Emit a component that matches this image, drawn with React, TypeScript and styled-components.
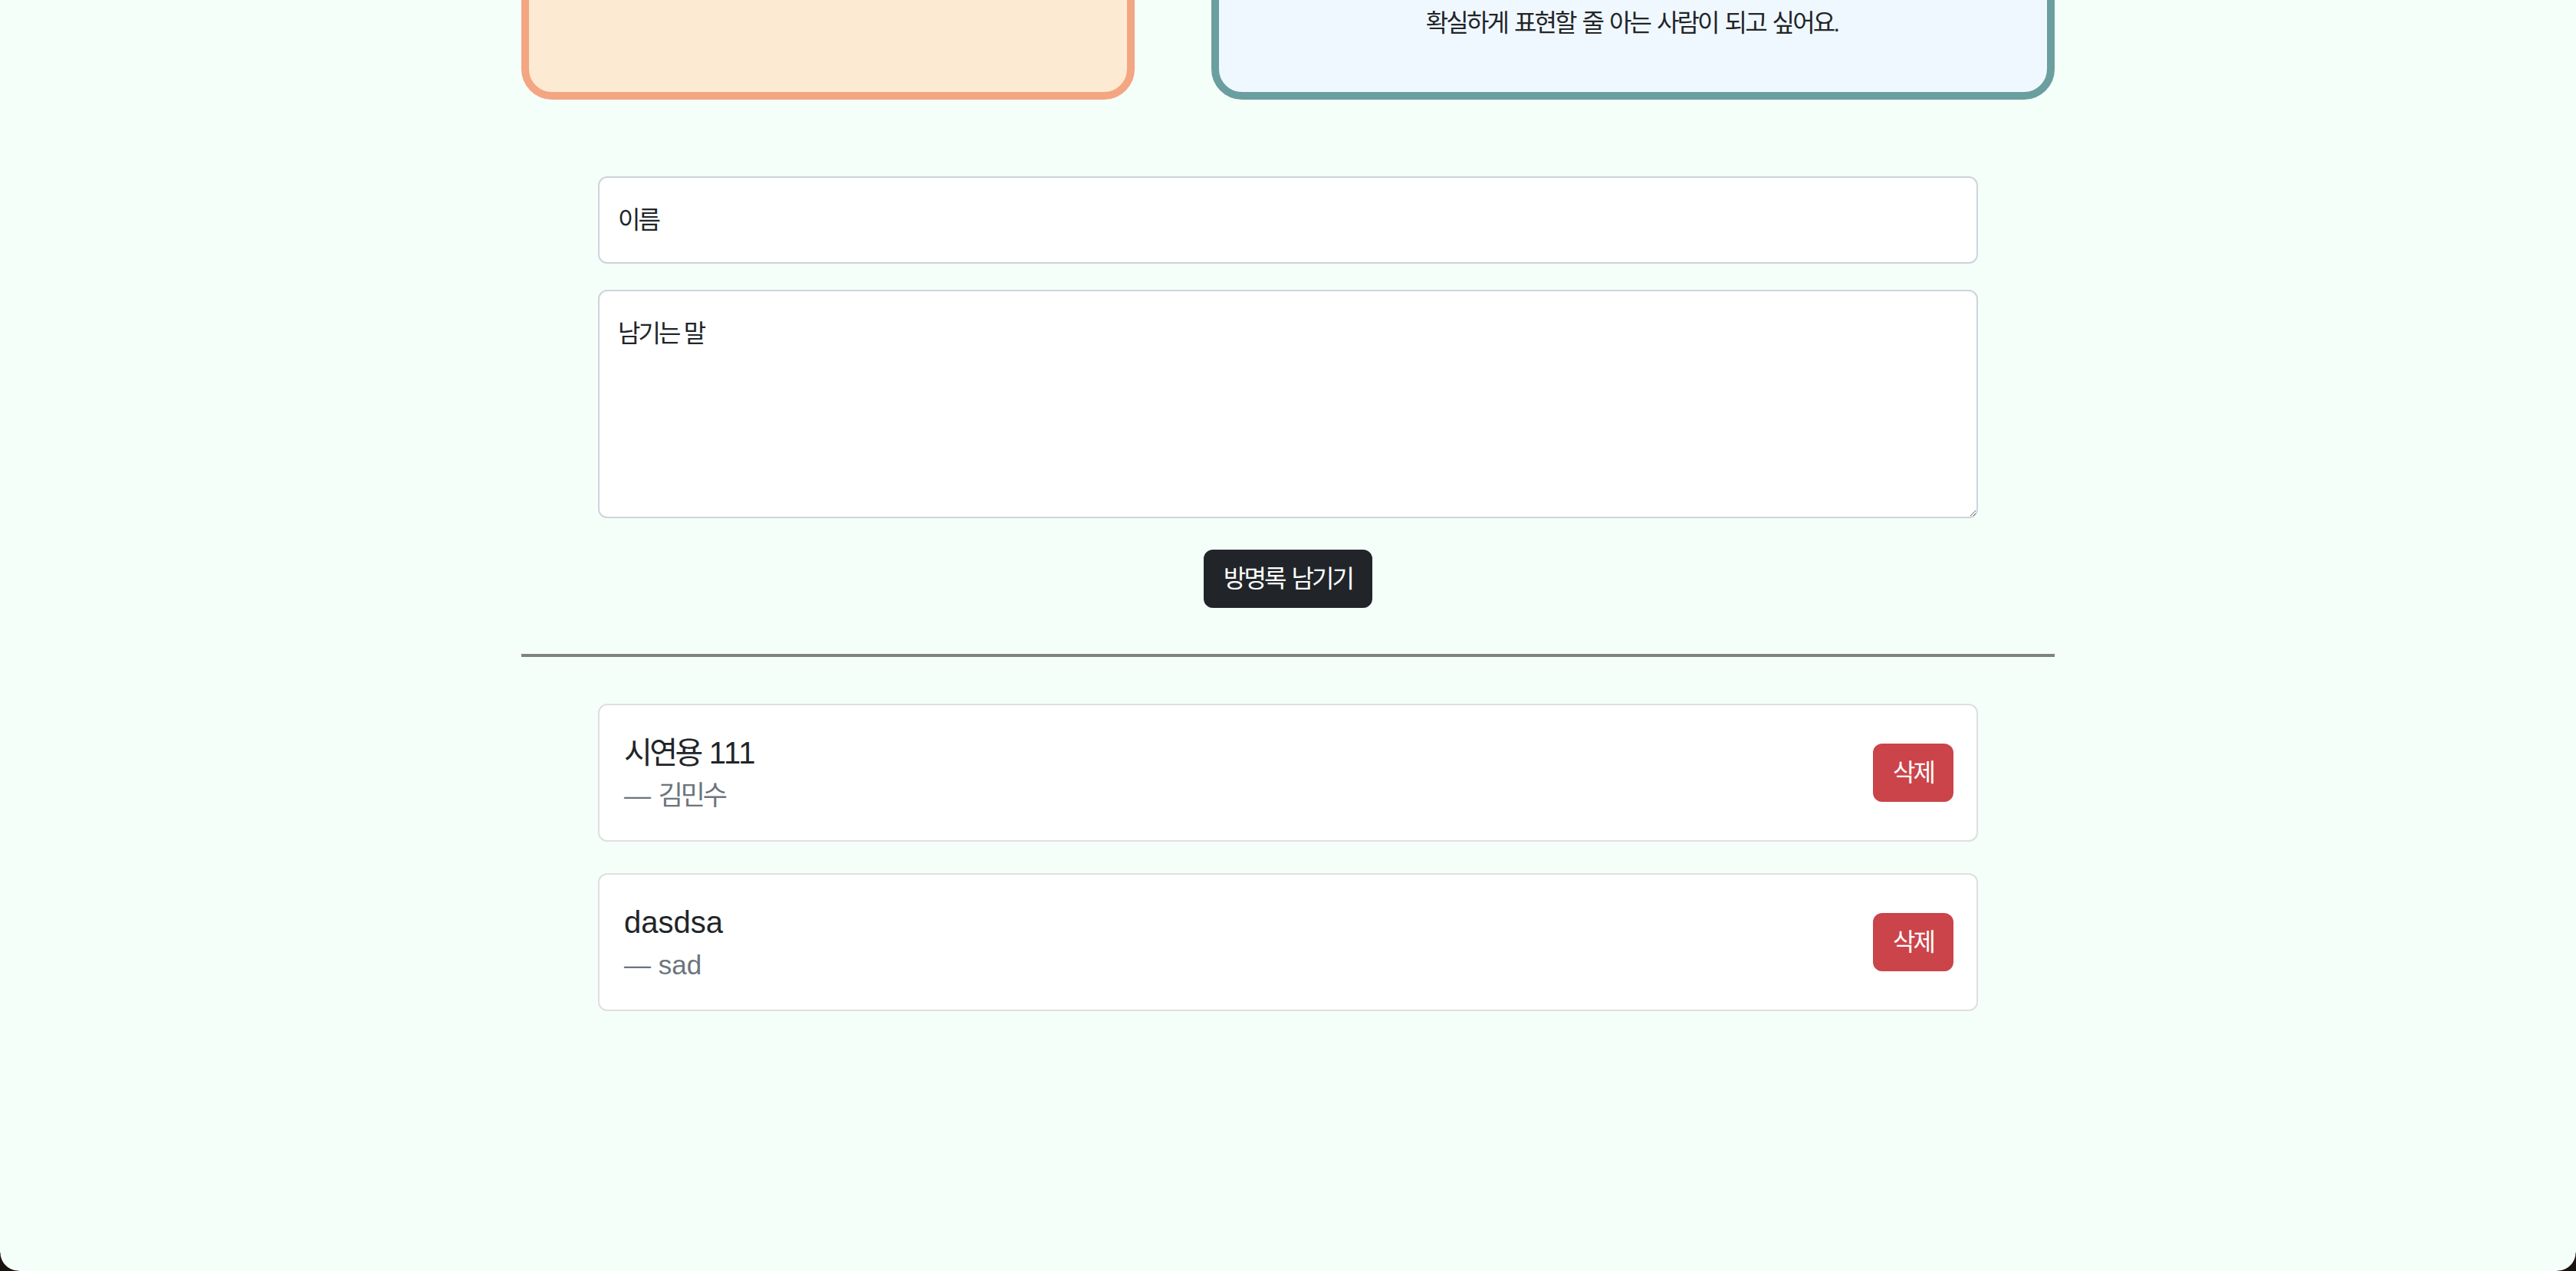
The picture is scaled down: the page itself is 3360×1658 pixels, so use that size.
import React from 'react';
import styled, { createGlobalStyle } from 'styled-components';

interface Entry {
  id: number;
  message: string;
  name: string;
}

const entries: Entry[] = [
  { id: 1, message: '시연용 111', name: '김민수' },
  { id: 2, message: 'dasdsa', name: 'sad' },
];

const GlobalStyle = createGlobalStyle`
  html, body {
    margin: 0;
    padding: 0;
    background: #f5fffa;
  }
  body {
    font-family: "Liberation Sans", "Noto Sans CJK KR", sans-serif;
    color: #212529;
    min-height: 100vh;
    overflow: hidden;
  }
  * {
    box-sizing: border-box;
  }
`;

const Ko = styled.span`
  letter-spacing: -0.09em;
`;

// hangul runs get tightened so they take the width of the mac font
const ko = (text: string) =>
  text.split(/([\uAC00-\uD7A3]+)/).map((part, i) =>
    /[\uAC00-\uD7A3]/.test(part) ? <Ko key={i}>{part}</Ko> : part
  );

const Page = styled.div`
  width: 2000px;
  margin: 0 auto;
  padding-bottom: 200px;
`;

// the page is scrolled, only the bottom of the intro cards shows
const IntroRow = styled.div`
  display: flex;
  gap: 100px;
  margin-top: -300px;
`;

const IntroCard = styled.div<{ $bg: string; $line: string; $w: number }>`
  width: ${(p) => p.$w}px;
  height: 430px;
  background: ${(p) => p.$bg};
  border: 10px solid ${(p) => p.$line};
  border-radius: 40px;
  display: flex;
  flex-direction: column;
  justify-content: flex-end;
  align-items: center;
  padding-bottom: 66px;
`;

const IntroText = styled.p`
  margin: 0;
  font-size: 32px;
  line-height: 48px;
  text-align: center;
`;

const Form = styled.form`
  width: 1800px;
  margin: 100px auto 0;
  display: flex;
  flex-direction: column;
  gap: 34px;
`;

const fieldCss = `
  width: 100%;
  font-family: "Liberation Sans", "Noto Sans CJK KR", sans-serif;
  font-size: 32px;
  line-height: 48px;
  color: #212529;
  background: #fff;
  border: 2px solid #ced4da;
  border-radius: 12px;
  padding: 31px 24px;
  letter-spacing: -0.09em;
  outline: none;
  &::placeholder {
    color: #212529;
    opacity: 1;
  }
`;

const NameInput = styled.input`
  ${fieldCss}
  height: 114px;
`;

const MessageInput = styled.textarea`
  ${fieldCss}
  height: 298px;
  resize: vertical;
  display: block;
`;

const Button = styled.button<{ $variant: 'dark' | 'danger' }>`
  font-family: "Liberation Sans", "Noto Sans CJK KR", sans-serif;
  font-size: 32px;
  line-height: 48px;
  color: #fff;
  background: ${(p) => (p.$variant === 'dark' ? '#212529' : '#cb444a')};
  border: 2px solid ${(p) => (p.$variant === 'dark' ? '#212529' : '#cb444a')};
  border-radius: 12px;
  padding: 12px 24px;
  cursor: pointer;
  flex-shrink: 0;
`;

const SubmitRow = styled.div`
  display: flex;
  justify-content: center;
  margin-top: 7px;
`;

const Divider = styled.hr`
  height: 4px;
  margin: 60px 0 0;
  border: none;
  background: #808080;
`;

const List = styled.div`
  width: 1800px;
  margin: 61px auto 0;
  display: flex;
  flex-direction: column;
  gap: 41px;
`;

const EntryCard = styled.div`
  display: flex;
  align-items: center;
  justify-content: space-between;
  background: #fff;
  border: 2px solid #dfdfdf;
  border-radius: 12px;
  padding: 32px 30px 32px 32px;
`;

const Quote = styled.blockquote`
  margin: 0;
`;

const Message = styled.p`
  margin: 0;
  font-size: 40px;
  line-height: 60px;
`;

const Author = styled.footer`
  font-size: 35px;
  line-height: 52px;
  color: #6c757d;
  &::before {
    content: "\\2014\\00a0";
  }
`;

const WindowCorner = styled.div<{ $side: 'left' | 'right' }>`
  position: fixed;
  bottom: 0;
  ${(p) => p.$side}: 0;
  width: 24px;
  height: 24px;
  background: radial-gradient(
    circle at top ${(p) => (p.$side === 'left' ? 'right' : 'left')},
    transparent 23px,
    #1b1212 24px
  );
`;

const App = () => {
  return (
    <>
      <GlobalStyle />
      <Page>
        <IntroRow>
          <IntroCard $bg="#fcebd2" $line="#f4a582" $w={800} />
          <IntroCard $bg="#f0f8ff" $line="#6b9e9f" $w={1100}>
            <IntroText>{ko('확실하게 표현할 줄 아는 사람이 되고 싶어요.')}</IntroText>
          </IntroCard>
        </IntroRow>

        <Form onSubmit={(e) => e.preventDefault()}>
          <NameInput placeholder="이름" />
          <MessageInput placeholder="남기는 말" />
          <SubmitRow>
            <Button type="submit" $variant="dark">{ko('방명록 남기기')}</Button>
          </SubmitRow>
        </Form>

        <Divider />

        <List>
          {entries.map((entry) => (
            <EntryCard key={entry.id}>
              <Quote>
                <Message>{ko(entry.message)}</Message>
                <Author>{ko(entry.name)}</Author>
              </Quote>
              <Button $variant="danger">{ko('삭제')}</Button>
            </EntryCard>
          ))}
        </List>
      </Page>
      <WindowCorner $side="left" />
      <WindowCorner $side="right" />
    </>
  );
};

export default App;
